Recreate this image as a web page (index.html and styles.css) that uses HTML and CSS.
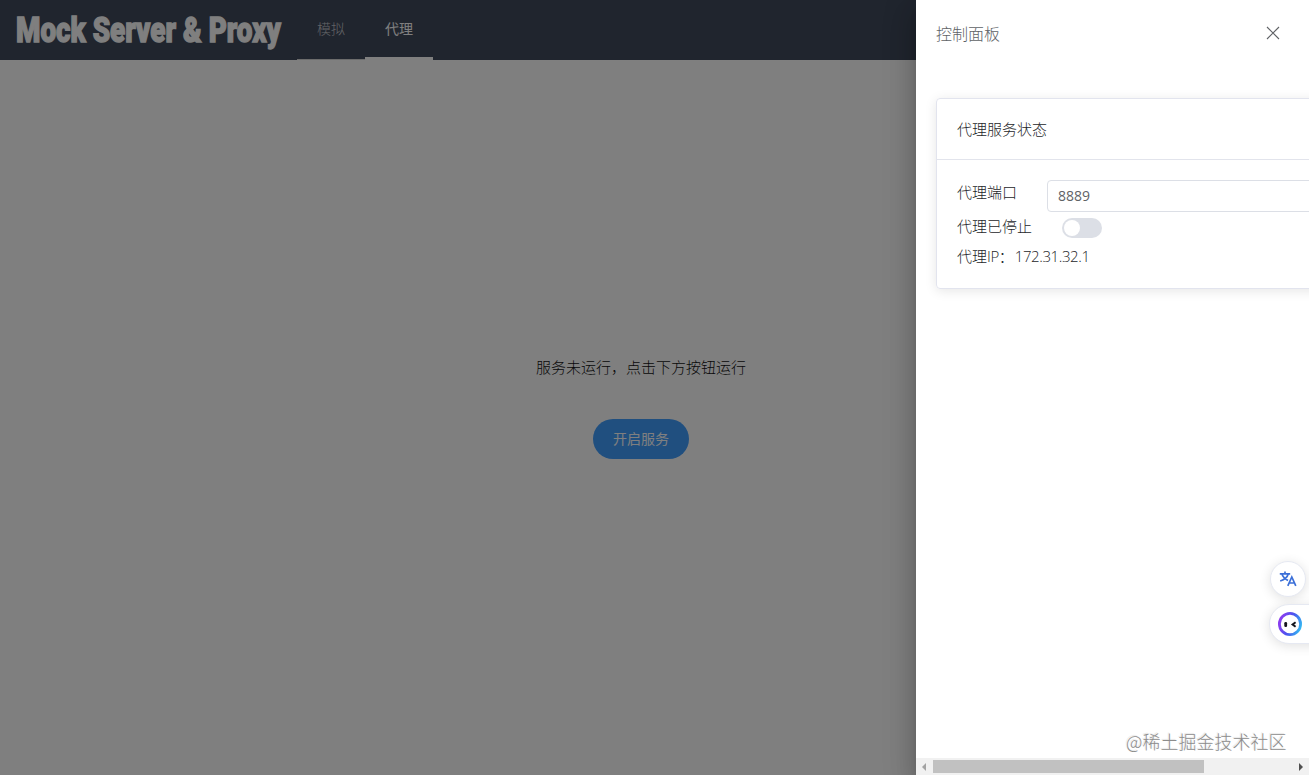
FILE: index.html
```html
<!DOCTYPE html>
<html lang="zh-CN">
<head>
<meta charset="utf-8">
<title>Mock Server &amp; Proxy</title>
<link rel="stylesheet" href="styles.css">
</head>
<body>
<div class="app">
  <header class="header">
    <svg class="logo" width="297" height="60" viewBox="0 0 297 60">
      <text transform="translate(16 41.500) scale(.72 1)" textLength="368" lengthAdjust="spacingAndGlyphs">Mock Server &amp; Proxy</text>
    </svg>
    <nav class="nav">
      <a class="nav-item">模拟</a>
      <a class="nav-item active">代理</a>
    </nav>
  </header>
  <main class="main">
    <p class="hint">服务未运行，点击下方按钮运行</p>
    <button class="start">开启服务</button>
  </main>
</div>
<div class="overlay">
  <aside class="drawer">
    <div class="drawer-head">
      <span class="drawer-title">控制面板</span>
      <svg class="close" width="14" height="14" viewBox="0 0 14 14"><path d="M1 1 13 13M13 1 1 13"/></svg>
    </div>
    <div class="drawer-body">
      <section class="card">
        <div class="card-head">代理服务状态</div>
        <div class="card-body">
          <div class="row port"><span class="label">代理端口</span><input class="input" value="8889"></div>
          <div class="row state"><span>代理已停止</span><span class="switch"></span></div>
          <div class="row ip"><span>代理<span class="latin">IP</span>：</span><span class="latin address">172.31.32.1</span></div>
        </div>
      </section>
    </div>
    <div class="scrollbar">
      <svg width="17" height="17" viewBox="0 0 17 17"><path fill="#a3a3a3" d="M10 5v8L6 9z"/></svg>
      <div class="track"><div class="thumb"></div></div>
      <svg width="17" height="17" viewBox="0 0 17 17"><path fill="#505050" d="M7 5v8l4-4z"/></svg>
    </div>
  </aside>
</div>
<div class="float translate">
  <svg width="18" height="18" viewBox="0 0 18 18" fill="none" stroke="#3b6fd8" stroke-width="1.7">
    <path d="M.8 3.800h10.400M6 1.400v2.400M3 4c.8 3 3.200 5 6 6.600M9.200 4C8.400 7.200 5.400 9.600 1.200 11M8.800 15.800 12.800 7 16.800 15.800M10.200 13h5.200"/>
  </svg>
</div>
<div class="float bot">
  <svg width="26" height="26" viewBox="0 0 26 26">
    <defs><linearGradient id="ring" x1="0" y1=".4" x2="1" y2=".75"><stop offset="0" stop-color="#8a3df0"/><stop offset=".5" stop-color="#4a55ee"/><stop offset="1" stop-color="#35b8f2"/></linearGradient></defs>
    <circle cx="13" cy="13" r="10.600" fill="#fff" stroke="url(#ring)" stroke-width="2.800"/>
    <rect x="7.300" y="11" width="2.800" height="5" rx="1.200" fill="#15151d"/>
    <path d="m18.600 11.300-3 2.200 3 2.200" fill="none" stroke="#15151d" stroke-width="2"/>
  </svg>
</div>
<div class="watermark">@稀土掘金技术社区</div>
</body>
</html>
```
FILE: styles.css
```css
* { box-sizing: border-box; }
body {
  margin: 0;
  height: 775px;
  overflow: hidden;
  position: relative;
  background: #fff;
  color: #252629;
  font: 300 15px "Noto Sans CJK SC", sans-serif;
}
.app { height: 775px; display: flex; flex-direction: column; }
.header { height: 60px; flex: none; display: flex; background: #414a5c; }
.logo {
  flex: none;
  fill: #fff;
  stroke: #fff;
  stroke-width: 1.3;
  font: 900 34.5px Roboto, sans-serif;
}
.nav { display: flex; }
.nav-item {
  width: 68px;
  height: 60px;
  border-bottom: 1px solid #d8d8d8;
  text-align: center;
  font-size: 14px;
  line-height: 56px;
  color: #c4c7cd;
}
.nav-item.active { color: #fff; border-bottom: 3px solid #fff; font-weight: 400; }
.main {
  flex: 1;
  width: 1282px;
  padding-top: 296px;
  display: flex;
  flex-direction: column;
  align-items: center;
}
.hint { margin: 0 0 41px; line-height: 22px; color: #111; }
.start {
  width: 96px;
  height: 40px;
  padding: 0 0 2px;
  border: 0;
  border-radius: 20px;
  background: #409eff;
  color: #fff;
  font: 400 14px "Noto Sans CJK SC", sans-serif;
}
.overlay {
  position: absolute;
  inset: 0;
  display: flex;
  justify-content: flex-end;
  background: rgba(0, 0, 0, .5);
}
.drawer {
  width: 393px;
  height: 775px;
  display: flex;
  flex-direction: column;
  background: #fff;
  box-shadow: 0 8px 10px -5px rgba(0,0,0,.2), 0 16px 24px 2px rgba(0,0,0,.14), 0 6px 30px 5px rgba(0,0,0,.12);
}
.drawer-head {
  height: 66px;
  padding: 0 29px 0 20px;
  display: flex;
  align-items: center;
  justify-content: space-between;
  color: #5e6266;
  font-size: 16px;
}
.close { fill: none; stroke: #606266; stroke-width: 1.1; }
.drawer-body { flex: 1; padding: 32px 0 0 20px; overflow: hidden; }
.card {
  width: 500px;
  height: 191px;
  border: 1px solid #e2e4ee;
  border-radius: 4px;
  box-shadow: 0 2px 12px rgba(0, 0, 0, .1);
}
.card-head { height: 61px; padding: 0 20px; line-height: 59px; border-bottom: 1px solid #e2e4ec; }
.card-body { padding: 20px; }
.row { display: flex; }
.port { height: 32px; line-height: 24px; }
.label { width: 90px; }
.input {
  flex: 1;
  height: 32px;
  padding: 0 10px 2px;
  border: 1px solid #dcdfe6;
  border-radius: 4px;
  background: #fff;
  color: #606266;
  font: 400 14px "Open Sans", sans-serif;
}
.state { height: 34px; gap: 30px; line-height: 27px; }
.switch {
  width: 40px;
  height: 20px;
  margin-top: 6px;
  padding: 2px;
  border-radius: 10px;
  background: #dcdfe6;
}
.switch::before { content: ""; display: block; width: 16px; height: 16px; border-radius: 50%; background: #fff; }
.ip { line-height: 20px; }
.latin { font-family: "Open Sans", sans-serif; letter-spacing: -.4px; }
.address { margin-left: 1px; }
.scrollbar { height: 17px; flex: none; display: flex; background: #f1f1f1; }
.track { flex: 1; padding: 2px 0; }
.thumb { width: 271px; height: 13px; background: #c1c1c1; }
.float {
  position: absolute;
  display: flex;
  align-items: center;
  background: #fff;
  border: 1px solid #e6e9f2;
  box-shadow: 0 2px 12px rgba(0, 0, 0, .12);
}
.translate { left: 1270px; top: 561px; width: 36px; height: 36px; border-radius: 50%; justify-content: center; }
.bot { left: 1269px; top: 604px; width: 50px; height: 40px; padding-left: 7px; border-radius: 20px 0 0 20px; }
.watermark {
  position: absolute;
  left: 1126px;
  top: 728px;
  font-size: 18px;
  line-height: 26px;
  white-space: nowrap;
  color: #8c8c8c;
  text-shadow: -1px -1px 1px #e4e4e4;
}
```
